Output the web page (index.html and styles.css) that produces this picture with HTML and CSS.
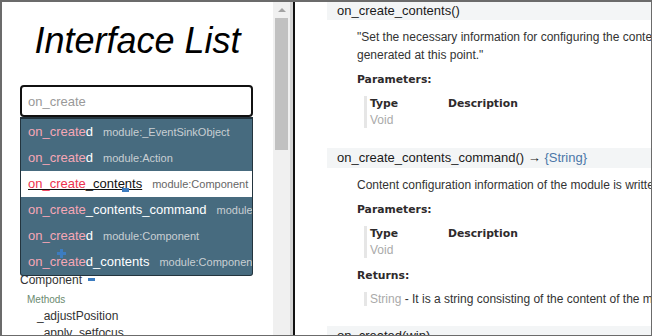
FILE: index.html
```html
<!DOCTYPE html>
<html lang="en">
<head>
    <meta charset="UTF-8">
    <meta name="viewport" content="width=device-width, initial-scale=1.0">
    <title>Interface List</title>
    <link rel="stylesheet" href="styles.css">
</head>
<body>
    <div class="frame">
        <aside class="sidebar">
            <div class="sidebar-inner">
                <h1 class="title">Interface List</h1>

                <div class="search">
                    <input type="text" class="search-input" placeholder="on_create" autocomplete="off">
                    <ul class="suggest">
                        <li class="suggest-item"><span class="name"><span class="hit">on_create</span>d</span><span class="module">module:_EventSinkObject</span></li>
                        <li class="suggest-item"><span class="name"><span class="hit">on_create</span>d</span><span class="module">module:Action</span></li>
                        <li class="suggest-item active"><span class="name"><span class="hit">on_create</span>_contents</span><span class="module">module:Component</span></li>
                        <li class="suggest-item"><span class="name"><span class="hit">on_create</span>_contents_command</span><span class="module">module:Component</span></li>
                        <li class="suggest-item"><span class="name"><span class="hit">on_create</span>d</span><span class="module">module:Component</span></li>
                        <li class="suggest-item"><span class="name"><span class="hit">on_create</span>d_contents</span><span class="module">module:Component</span></li>
                    </ul>
                    <span class="ghost-toggle plus"></span>
                    <span class="ghost-toggle bar"></span>
                </div>

                <div class="tree">
                    <div class="tree-node">Component <span class="toggle-minus"></span></div>
                    <div class="tree-group">Methods</div>
                    <div class="tree-leaf">_adjustPosition</div>
                    <div class="tree-leaf">_apply_setfocus</div>
                </div>
            </div>
            <div class="scrollbar">
                <span class="scroll-arrow"></span>
                <span class="scroll-thumb"></span>
            </div>
        </aside>

        <div class="divider"></div>

        <main class="content">
            <section class="method first">
                <div class="method-head">on_create_contents()</div>
                <div class="method-body">
                    <p class="desc">"Set the necessary information for configuring the contents. The contents are<br>generated at this point."</p>
                    <div class="label">Parameters:</div>
                    <div class="params">
                        <span class="th">Type</span><span class="th">Description</span>
                        <span class="type">Void</span><span></span>
                    </div>
                </div>
            </section>

            <section class="method">
                <div class="method-head">on_create_contents_command() <span class="arrow">&rarr;</span> <span class="ret">{String}</span></div>
                <div class="method-body">
                    <p class="desc">Content configuration information of the module is written as a command string.</p>
                    <div class="label">Parameters:</div>
                    <div class="params">
                        <span class="th">Type</span><span class="th">Description</span>
                        <span class="type">Void</span><span></span>
                    </div>
                    <div class="label returns-label">Returns:</div>
                    <div class="returns"><span class="type">String</span> - It is a string consisting of the content of the module.</div>
                </div>
            </section>

            <section class="method">
                <div class="method-head">on_created(win)</div>
            </section>
        </main>
    </div>
</body>
</html>
```

FILE: styles.css
```css
* {
    box-sizing: border-box;
    margin: 0;
    padding: 0;
}

body {
    font-family: "Liberation Sans", Arial, sans-serif;
    background: white;
    color: #333;
}

.frame {
    display: flex;
    width: 652px;
    height: 336px;
    border-top: 2px solid #6b6b6b;
    border-left: 2px solid #6b6b6b;
    border-right: 1px solid #6b6b6b;
    border-bottom: 1px solid #6b6b6b;
    overflow: hidden;
}

/* left side */

.sidebar {
    display: flex;
    flex-shrink: 0;
}

.sidebar-inner {
    width: 271px;
    overflow: hidden;
}

.title {
    margin-top: 18px;
    text-align: center;
    font-size: 36px;
    font-style: italic;
    font-weight: normal;
    line-height: 41px;
    color: #000;
}

.search {
    position: relative;
    margin: 24px 0 0 18px;
    width: 233px;
}

.search-input {
    display: block;
    width: 233px;
    height: 32px;
    padding: 0 6px;
    border: 2px solid #111;
    border-radius: 4px;
    font-family: inherit;
    font-size: 13px;
    outline: none;
}

.search-input::placeholder {
    color: #999;
}

.suggest {
    position: absolute;
    top: 32px;
    left: 0;
    width: 233px;
    list-style: none;
    background: #476b7f;
    border: 1px solid #23343e;
    border-top-width: 2px;
    border-radius: 0 0 3px 3px;
    overflow: hidden;
}

.suggest-item {
    height: 26px;
    line-height: 26px;
    padding-left: 7px;
    white-space: nowrap;
    font-size: 13px;
    color: white;
}

.suggest-item .hit {
    color: #f6a7b6;
}

.suggest-item .module {
    margin-left: 10px;
    font-size: 11px;
    color: #c9cfd3;
}

.suggest-item.active {
    background: white;
    color: #111;
}

.suggest-item.active .name {
    text-decoration: underline;
    text-decoration-color: #111;
}

.suggest-item.active .hit {
    color: #ee3350;
}

.suggest-item.active .module {
    color: #666;
}

.ghost-toggle {
    position: absolute;
    background: #3c7cc0;
}

.ghost-toggle.plus {
    left: 40px;
    top: 164px;
    width: 3px;
    height: 9px;
}

.ghost-toggle.plus::before {
    content: "";
    position: absolute;
    left: -3px;
    top: 3px;
    width: 9px;
    height: 3px;
    background: #3c7cc0;
}

.ghost-toggle.bar {
    left: 102px;
    top: 103px;
    width: 7px;
    height: 4px;
}

.tree {
    margin: 155px 0 0 18px;
    white-space: nowrap;
}

.tree-node {
    font-size: 12px;
    line-height: 16px;
    color: #333;
}

.toggle-minus {
    display: inline-block;
    width: 7px;
    height: 3px;
    margin-left: 3px;
    vertical-align: 3px;
    background: #3c7cc0;
}

.tree-group {
    margin: 6px 0 0 7px;
    font-size: 10px;
    line-height: 12px;
    color: #6b8a6f;
}

.tree-group + .tree-leaf {
    margin-top: 2px;
}

.tree-leaf {
    margin-left: 17px;
    font-size: 12px;
    line-height: 17px;
    color: #333;
}

.scrollbar {
    display: flex;
    flex-direction: column;
    align-items: center;
    width: 17px;
    background: #f0f0f0;
}

.scroll-arrow {
    margin-top: 6px;
    width: 0;
    height: 0;
    border-left: 4px solid transparent;
    border-right: 4px solid transparent;
    border-bottom: 4px solid #a3a3a3;
}

.scroll-thumb {
    margin-top: 6px;
    width: 13px;
    height: 132px;
    background: #c1c1c1;
}

.divider {
    flex-shrink: 0;
    width: 5px;
    border-left: 3px solid #d4d4d4;
    background: #111;
}

/* right side */

.content {
    flex: 1;
    min-width: 0;
    overflow: hidden;
}

.method + .method {
    margin-top: 20px;
}

.method-head {
    margin-left: 32px;
    width: 600px;
    height: 20px;
    padding-left: 10px;
    line-height: 20px;
    background: #f3f5f6;
    font-size: 13px;
    color: #1a1a1a;
    white-space: nowrap;
}

.method.first .method-head {
    height: 18px;
    line-height: 18px;
}

.method-head .ret {
    color: #4b77a8;
}

.method-body {
    padding-left: 62px;
    white-space: nowrap;
}

.desc {
    margin-top: 8px;
    font-size: 12px;
    line-height: 18px;
    color: #333;
}

.label {
    margin-top: 8px;
    font-family: "DejaVu Sans", Verdana, sans-serif;
    font-size: 10.8px;
    font-weight: bold;
    line-height: 16px;
    color: #2e2a2b;
}

.returns-label {
    margin-top: 10px;
}

.params {
    display: grid;
    grid-template-columns: 78px auto;
    margin: 8px 0 0 7px;
    padding-left: 3px;
    border-left: 3px solid #e6e6e6;
    line-height: 16px;
}

.params .th {
    font-family: "DejaVu Sans", Verdana, sans-serif;
    font-size: 10.8px;
    font-weight: bold;
    color: #2e2a2b;
}

.type {
    font-size: 12px;
    color: #aaa;
}

.returns {
    margin: 8px 0 0 7px;
    padding-left: 3px;
    border-left: 3px solid #e6e6e6;
    font-size: 12px;
    line-height: 14px;
    color: #333;
}
```
